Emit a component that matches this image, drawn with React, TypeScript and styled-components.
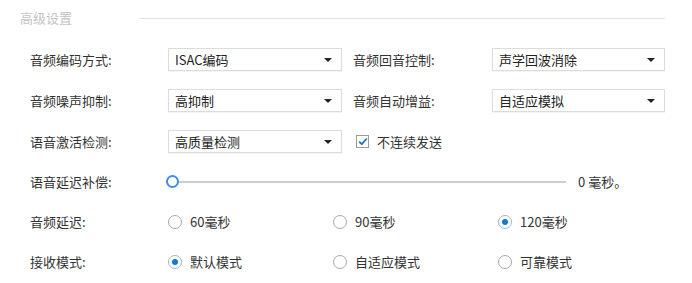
import React from "react";
import styled, { createGlobalStyle } from "styled-components";

const GlobalStyle = createGlobalStyle`
  body {
    margin: 0;
    background: #ffffff;
    font-family: "Noto Sans CJK SC", "Noto Sans", sans-serif;
    color: #333333;
    font-size: 13px;
  }
`;

const Page = styled.div`
  width: 692px;
  height: 283px;
  box-sizing: border-box;
  padding: 0 27px 0 20px;
  overflow: hidden;
`;

const Header = styled.div`
  display: flex;
  align-items: center;
  height: 36px;
  margin-bottom: 3px;
`;

const Title = styled.div`
  width: 120px;
  color: #c4c4c4;
  font-size: 13px;
  line-height: 16px;
`;

const HeaderLine = styled.div`
  flex: 1;
  height: 1px;
  background: #e2e2e2;
`;

const Form = styled.div`
  padding-left: 10px;
`;

const Row = styled.div<{ $h?: number }>`
  display: flex;
  align-items: center;
  height: ${(p) => p.$h ?? 41}px;
`;

const Label = styled.div<{ $w?: number; $ml?: number }>`
  width: ${(p) => p.$w ?? 138}px;
  margin-left: ${(p) => p.$ml ?? 0}px;
  flex-shrink: 0;
  line-height: 16px;
  color: #333333;
  white-space: nowrap;
`;

const SelectBox = styled.div<{ $w: number }>`
  box-sizing: border-box;
  width: ${(p) => p.$w}px;
  height: 23px;
  display: flex;
  align-items: center;
  justify-content: space-between;
  padding: 0 9px 0 6px;
  border: 1px solid #dcdcdc;
  background: #ffffff;
  box-shadow: 0 1px 1px rgba(0, 0, 0, 0.04);
  color: #222222;
  line-height: 16px;
`;

const Arrow = styled.span`
  width: 0;
  height: 0;
  border-left: 4px solid transparent;
  border-right: 4px solid transparent;
  border-top: 4px solid #222222;
`;

const CheckWrap = styled.div`
  display: flex;
  align-items: center;
  gap: 8px;
  margin-left: 14px;
  line-height: 16px;
`;

const CheckSquare = styled.span`
  box-sizing: border-box;
  width: 13px;
  height: 13px;
  border: 1px solid #9a9a9a;
  background: #fff;
  display: flex;
  align-items: center;
  justify-content: center;
`;

const SliderWrap = styled.div`
  position: relative;
  width: 400px;
  height: 14px;
  margin-left: -2px;
  display: flex;
  align-items: center;
`;

const Track = styled.div`
  flex: 1;
  height: 2px;
  background: #cfcfcf;
`;

const Thumb = styled.span`
  position: absolute;
  left: 0;
  top: 0;
  box-sizing: border-box;
  width: 13px;
  height: 13px;
  border-radius: 50%;
  border: 2.5px solid #3f90dc;
  background: #fff;
`;

const SliderValue = styled.div`
  margin-left: 12px;
  line-height: 16px;
`;

const RadioOption = styled.div`
  width: 165px;
  display: flex;
  align-items: center;
  gap: 8px;
  line-height: 16px;
`;

const RadioCircle = styled.span<{ $on?: boolean }>`
  box-sizing: border-box;
  width: 14px;
  height: 14px;
  border-radius: 50%;
  border: 1px solid ${(p) => (p.$on ? "#9fb6cf" : "#a8a8a8")};
  background: #fff;
  display: flex;
  align-items: center;
  justify-content: center;
  &::after {
    content: "";
    display: ${(p) => (p.$on ? "block" : "none")};
    width: 6px;
    height: 6px;
    border-radius: 50%;
    background: #1677d2;
  }
`;

function Select({ value, w }: { value: string; w: number }) {
  return (
    <SelectBox $w={w}>
      <span>{value}</span>
      <Arrow />
    </SelectBox>
  );
}

function RadioGroup({ options, selected }: { options: string[]; selected: number }) {
  return (
    <>
      {options.map((o, i) => (
        <RadioOption key={o}>
          <RadioCircle $on={i === selected} />
          <span>{o}</span>
        </RadioOption>
      ))}
    </>
  );
}

export default function App() {
  return (
    <>
      <GlobalStyle />
      <Page>
        <Header>
          <Title>高级设置</Title>
          <HeaderLine />
        </Header>
        <Form>
          <Row>
            <Label>音频编码方式:</Label>
            <Select value="ISAC编码" w={174} />
            <Label $w={139} $ml={11}>音频回音控制:</Label>
            <Select value="声学回波消除" w={173} />
          </Row>
          <Row>
            <Label>音频噪声抑制:</Label>
            <Select value="高抑制" w={174} />
            <Label $w={139} $ml={11}>音频自动增益:</Label>
            <Select value="自适应模拟" w={173} />
          </Row>
          <Row>
            <Label>语音激活检测:</Label>
            <Select value="高质量检测" w={174} />
            <CheckWrap>
              <CheckSquare>
                <svg width="10" height="9" viewBox="0 0 10 9">
                  <path d="M1.2 4.6 L3.8 7.2 L8.8 1.5" fill="none" stroke="#1e74c8" strokeWidth="1.8" />
                </svg>
              </CheckSquare>
              <span>不连续发送</span>
            </CheckWrap>
          </Row>
          <Row $h={40}>
            <Label>语音延迟补偿:</Label>
            <SliderWrap>
              <Track />
              <Thumb />
            </SliderWrap>
            <SliderValue>0 毫秒。</SliderValue>
          </Row>
          <Row $h={40}>
            <Label>音频延迟:</Label>
            <RadioGroup options={["60毫秒", "90毫秒", "120毫秒"]} selected={2} />
          </Row>
          <Row $h={40}>
            <Label>接收模式:</Label>
            <RadioGroup options={["默认模式", "自适应模式", "可靠模式"]} selected={0} />
          </Row>
        </Form>
      </Page>
    </>
  );
}
